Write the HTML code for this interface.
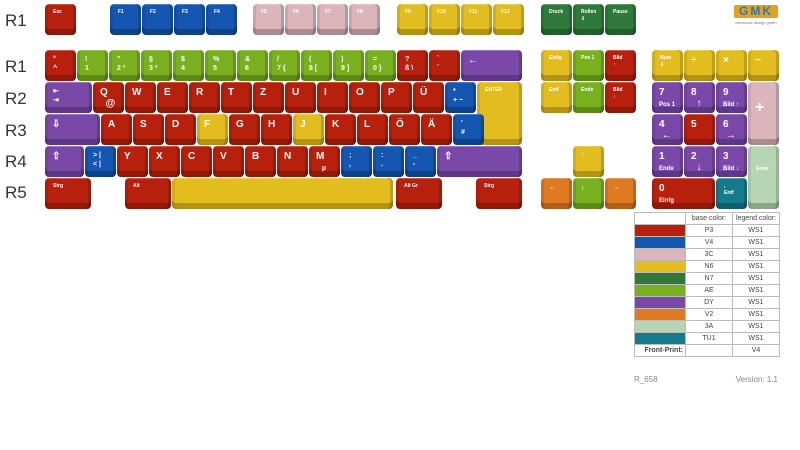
<!DOCTYPE html>
<html><head><meta charset="utf-8"><style>
body{margin:0;width:800px;height:450px;background:#fff;position:relative;overflow:hidden;font-family:"Liberation Sans",sans-serif}
.k{position:absolute;display:block;font-style:normal;width:31px;height:31px;border-radius:4px;color:#fff;font-weight:bold;font-size:7px;line-height:9px;padding:5px 0 0 8px;box-sizing:border-box;box-shadow:inset 0 -6px 0 rgba(0,0,0,.22),inset 3px 0 0 rgba(0,0,0,.08),inset -3px 0 0 rgba(0,0,0,.16),inset 0 1px 0 rgba(255,255,255,.25)}
.big{font-size:10px;line-height:11px;padding-left:7px}
.sm{font-size:5px;line-height:7px}
.a{top:4px}.b{top:50px}.c{top:82px}.d{top:114px}.e{top:146px}.f{top:178px}
.r{background:#b8200e}.bl{background:#1456b0}.p{background:#dcb4bc}.y{background:#e3bd1f}.g{background:#2e7a3a}.l{background:#78b020}.v{background:#7a48a8}.o{background:#e07a22}.m{background:#b6d5b2}.t{background:#157a8a}
.lab{position:absolute;left:5px;font-size:17px;color:#333;line-height:20px}
table{position:absolute;left:634px;top:212px;border-collapse:collapse;font-size:7px;color:#444}
td{border:1px solid #bbb;height:11px;padding:0;text-align:center;line-height:10px}
</style></head><body>
<div class="lab" style="top:11px">R1</div>
<div class="lab" style="top:57px">R1</div>
<div class="lab" style="top:89px">R2</div>
<div class="lab" style="top:121px">R3</div>
<div class="lab" style="top:152px">R4</div>
<div class="lab" style="top:183px">R5</div>

<i class="k r a sm" style="left:45px">Esc</i>
<i class="k bl a sm" style="left:110px">F1</i><i class="k bl a sm" style="left:142px">F2</i><i class="k bl a sm" style="left:174px">F3</i><i class="k bl a sm" style="left:206px">F4</i>
<i class="k p a sm" style="left:253px">F5</i><i class="k p a sm" style="left:285px">F6</i><i class="k p a sm" style="left:317px">F7</i><i class="k p a sm" style="left:349px">F8</i>
<i class="k y a sm" style="left:397px">F9</i><i class="k y a sm" style="left:429px">F10</i><i class="k y a sm" style="left:461px">F11</i><i class="k y a sm" style="left:493px">F12</i>
<i class="k g a sm" style="left:541px">Druck</i><i class="k g a sm" style="left:573px">Rollen<br>⇩</i><i class="k g a sm" style="left:605px">Pause</i>

<i class="k r b" style="left:45px">°<br>^</i>
<i class="k l b" style="left:77px">!<br>1</i>
<i class="k l b" style="left:109px">"<br>2 ²</i>
<i class="k l b" style="left:141px">§<br>3 ³</i>
<i class="k l b" style="left:173px">$<br>4</i>
<i class="k l b" style="left:205px">%<br>5</i>
<i class="k l b" style="left:237px">&amp;<br>6</i>
<i class="k l b" style="left:269px">/<br>7 {</i>
<i class="k l b" style="left:301px">(<br>8 [</i>
<i class="k l b" style="left:333px">)<br>9 ]</i>
<i class="k l b" style="left:365px">=<br>0 }</i>
<i class="k r b" style="left:397px">?<br>ß \</i>
<i class="k r b" style="left:429px">`<br>´</i>
<i class="k v b big" style="left:461px;width:61px">←</i>

<i class="k v c" style="left:45px;width:47px">⇤<br>⇥</i>
<i class="k r c big" style="left:93px">Q<br>&nbsp; @</i>
<i class="k r c big" style="left:125px">W</i><i class="k r c big" style="left:157px">E</i><i class="k r c big" style="left:189px">R</i><i class="k r c big" style="left:221px">T</i><i class="k r c big" style="left:253px">Z</i><i class="k r c big" style="left:285px">U</i><i class="k r c big" style="left:317px">I</i><i class="k r c big" style="left:349px">O</i><i class="k r c big" style="left:381px">P</i><i class="k r c big" style="left:413px">Ü</i>
<i class="k bl c" style="left:445px">*<br>+ ~</i>
<i class="k y c sm" style="left:477px;width:45px;height:63px">ENTER</i>

<i class="k v d big" style="left:45px;width:55px">⇩</i>
<i class="k r d big" style="left:101px">A</i><i class="k r d big" style="left:133px">S</i><i class="k r d big" style="left:165px">D</i><i class="k y d big" style="left:197px">F</i><i class="k r d big" style="left:229px">G</i><i class="k r d big" style="left:261px">H</i><i class="k y d big" style="left:293px">J</i><i class="k r d big" style="left:325px">K</i><i class="k r d big" style="left:357px">L</i><i class="k r d big" style="left:389px">Ö</i><i class="k r d big" style="left:421px">Ä</i>
<i class="k bl d" style="left:453px">'<br>#</i>

<i class="k v e big" style="left:45px;width:39px">⇧</i>
<i class="k bl e" style="left:85px">&gt; |<br>&lt; |</i>
<i class="k r e big" style="left:117px">Y</i><i class="k r e big" style="left:149px">X</i><i class="k r e big" style="left:181px">C</i><i class="k r e big" style="left:213px">V</i><i class="k r e big" style="left:245px">B</i><i class="k r e big" style="left:277px">N</i><i class="k r e big" style="left:309px">M<br><span style="font-size:7px">&nbsp;&nbsp; µ</span></i>
<i class="k bl e" style="left:341px">;<br>,</i><i class="k bl e" style="left:373px">:<br>.</i><i class="k bl e" style="left:405px">_<br>-</i>
<i class="k v e big" style="left:437px;width:85px">⇧</i>

<i class="k r f sm" style="left:45px;width:46px">Strg</i>
<i class="k r f sm" style="left:125px;width:46px">Alt</i>
<i class="k y f" style="left:172px;width:221px"></i>
<i class="k r f sm" style="left:396px;width:46px">Alt Gr</i>
<i class="k r f sm" style="left:476px;width:46px">Strg</i>

<i class="k y b sm" style="left:541px">Einfg</i><i class="k l b sm" style="left:573px">Pos 1</i><i class="k r b sm" style="left:605px">Bild<br>↑</i>
<i class="k y c sm" style="left:541px">Entf</i><i class="k l c sm" style="left:573px">Ende</i><i class="k r c sm" style="left:605px">Bild<br>↓</i>
<i class="k y e" style="left:573px">↑</i>
<i class="k o f" style="left:541px">←</i><i class="k l f" style="left:573px">↓</i><i class="k o f" style="left:605px">→</i>

<i class="k y b sm" style="left:652px">Num<br>⇩</i><i class="k y b big" style="left:684px">÷</i><i class="k y b big" style="left:716px">×</i><i class="k y b big" style="left:748px">−</i>
<i class="k v c big" style="left:652px">7<br><span style="font-size:6px">Pos 1</span></i><i class="k v c big" style="left:684px">8<br>&nbsp; ↑</i><i class="k v c big" style="left:716px">9<br><span style="font-size:6px">Bild ↑</span></i>
<i class="k p c big" style="left:748px;height:63px;padding-top:20px;font-size:16px">+</i>
<i class="k v d big" style="left:652px">4<br>&nbsp;←</i><i class="k r d big" style="left:684px">5</i><i class="k v d big" style="left:716px">6<br>&nbsp;→</i>
<i class="k v e big" style="left:652px">1<br><span style="font-size:6px">Ende</span></i><i class="k v e big" style="left:684px">2<br>&nbsp; ↓</i><i class="k v e big" style="left:716px">3<br><span style="font-size:6px">Bild ↓</span></i>
<i class="k m e sm" style="left:748px;height:63px;padding-top:20px">Enter</i>
<i class="k r f big" style="left:652px;width:63px">0<br><span style="font-size:6px">Einfg</span></i><i class="k t f sm" style="left:716px">,<br>Entf</i>

<div style="position:absolute;left:734px;top:5px;width:44px;height:13px;background:#e6a020;border-radius:2px;color:#2b7ab0;font-weight:bold;font-size:12px;line-height:13px;text-align:center;letter-spacing:2px">GMK</div>
<div style="position:absolute;left:730px;top:20px;width:52px;font-size:4px;color:#777;text-align:center">electronic design gmbh</div>

<table>
<tr><td style="width:50px"></td><td style="width:46px">base color:</td><td style="width:46px">legend color:</td></tr>
<tr><td style="background:#b8200e"></td><td>P3</td><td>WS1</td></tr>
<tr><td style="background:#1456b0"></td><td>V4</td><td>WS1</td></tr>
<tr><td style="background:#dcb4bc"></td><td>3C</td><td>WS1</td></tr>
<tr><td style="background:#e3bd1f"></td><td>N6</td><td>WS1</td></tr>
<tr><td style="background:#2e7a3a"></td><td>N7</td><td>WS1</td></tr>
<tr><td style="background:#78b020"></td><td>AE</td><td>WS1</td></tr>
<tr><td style="background:#7a48a8"></td><td>DY</td><td>WS1</td></tr>
<tr><td style="background:#e07a22"></td><td>V2</td><td>WS1</td></tr>
<tr><td style="background:#b6d5b2"></td><td>3A</td><td>WS1</td></tr>
<tr><td style="background:#157a8a"></td><td>TU1</td><td>WS1</td></tr>
<tr><td style="text-align:right;font-weight:bold;padding-right:2px">Front-Print:</td><td></td><td>V4</td></tr>
</table>
<div style="position:absolute;left:634px;top:375px;font-size:8px;color:#888">R_658</div>
<div style="position:absolute;left:700px;width:78px;top:375px;font-size:8px;color:#888;text-align:right">Version: 1.1</div>
</body></html>
